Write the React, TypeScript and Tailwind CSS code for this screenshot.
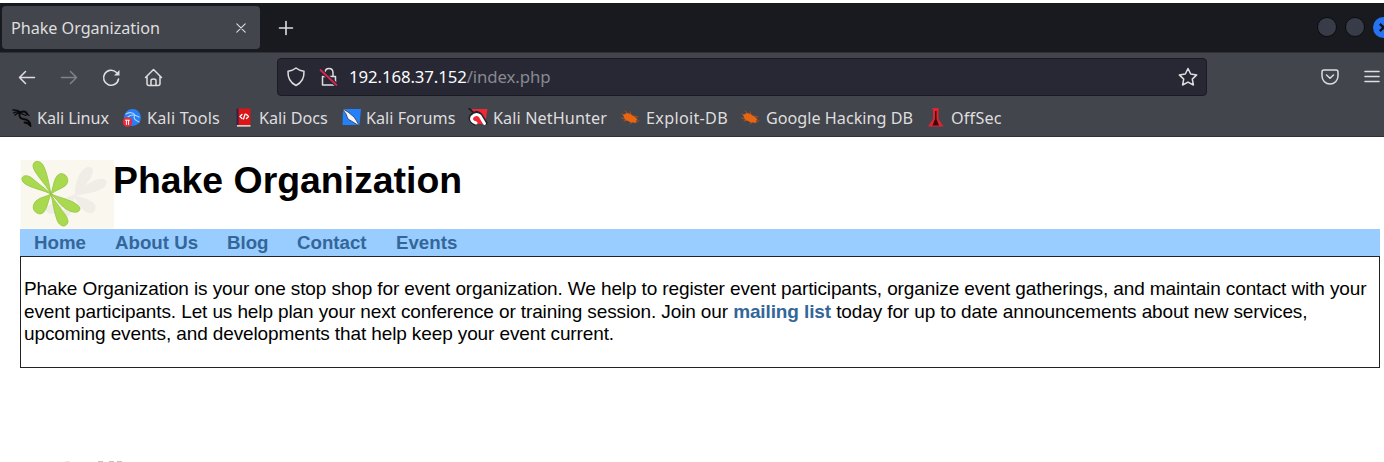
import type { ReactNode } from "react";

const CHROME = "font-['Noto_Sans',sans-serif]";

function Icon({ children, className = "h-5 w-5" }: { children: ReactNode; className?: string }) {
  return (
    <svg viewBox="0 0 20 20" className={`block shrink-0 ${className}`} fill="none" stroke="#dedee1" strokeWidth="1.3" strokeLinecap="round" strokeLinejoin="round">
      {children}
    </svg>
  );
}

function Bug() {
  return (
    <g>
      <path d="M1 6 L5 8 M4 3 L7 6 M0.500 10 L4 11 M9 16 L11 14 M13 8 L17 9 M14 13 L18 13 M9 4 L10 7 M3 13 L6 12" stroke="#b8541a" strokeWidth="0.9" />
      <path d="M2 7 L5 5.500 L7 5 L10 6.500 L14 9 L16.500 11.500 L15 12.500 L15.500 15 L12.500 14.500 L10 14.500 L7 13 L4 11.500Z" fill="#ea6512" stroke="none" />
    </g>
  );
}

const bookmarks: { label: string; width: string; tracking: string; icon: ReactNode }[] = [
  {
    label: "Kali Linux",
    width: "w-[110px]",
    tracking: "tracking-[-0.1px]",
    icon: (
      <g stroke="#08090b">
        <path d="M1 2 Q6 1.500 9 4.500 M1.500 5 Q5 3 8 4.500 M3 7 Q6 4.500 8.500 5" strokeWidth="1.4" />
        <path d="M8 4.500 Q14 2 15 6 M8 4.500 Q6 10 11 11 Q18 11.500 18.500 18 Q16 14.500 12.500 14.500" strokeWidth="1.9" />
        <path d="M13 4 L17 7.500 M9 5.500 L14 7.500" strokeWidth="1.1" />
      </g>
    ),
  },
  {
    label: "Kali Tools",
    width: "w-[112px]",
    tracking: "tracking-[0.2px]",
    icon: (
      <g stroke="none">
        <circle cx="10.5" cy="9.5" r="8.5" fill="#2a7ef4" />
        <path d="M4 6 Q10 3 13 7 Q10 11 17 14 M6 9 Q10 5 17 9" stroke="#a4d4ff" strokeWidth="1.2" />
        <circle cx="5.5" cy="14" r="4.8" fill="#e52a3c" />
        <path d="M3.5 12.2 H7.5 M4.4 12.5 V16.5 M6.6 12.5 V16.5" stroke="#fff" strokeWidth="1" />
      </g>
    ),
  },
  {
    label: "Kali Docs",
    width: "w-[107px]",
    tracking: "tracking-normal",
    icon: (
      <g stroke="none">
        <path d="M2.500 0.500 H16.500 V18 H2.500Z" fill="#dc1517" />
        <path d="M2.500 0.500 H4.500 V17 H2.500Z" fill="#1a2852" />
        <path d="M3 17 H16.500 V18.700 H3Z" fill="#d8cccc" />
        <path d="M8 6.500 L6 8.500 L8 10.500 M12.500 6.500 L14.500 8.500 L12.500 10.500 M11.200 6 L9.500 11" stroke="#fff" strokeWidth="1.3" />
      </g>
    ),
  },
  {
    label: "Kali Forums",
    width: "w-[127px]",
    tracking: "tracking-normal",
    icon: (
      <g stroke="none">
        <path d="M2 1 H20 L18.500 17 H1.500Z" fill="#2480fb" />
        <path d="M1 0.500 L7 4 L13 9 L15 12 L18.500 18 L12 14 L7 11 L5 6Z" fill="#f4f8fc" stroke="#333942" strokeWidth="0.8" />
      </g>
    ),
  },
  {
    label: "Kali NetHunter",
    width: "w-[153px]",
    tracking: "tracking-[0.1px]",
    icon: (
      <g stroke="none">
        <path d="M4 1 H19.500 L17 16 H5Z" fill="#ef2836" />
        <path d="M1 0.500 L6 5" stroke="#171a20" strokeWidth="1.6" />
        <path d="M7 15.500 Q0.500 12 3.500 7.500 Q8 2.500 12.500 7 L17.500 15" stroke="#20232a" strokeWidth="4" />
        <path d="M8 15 Q2 13 4 9 Q8 4.500 12 8 L16.500 15.500" stroke="#fff" strokeWidth="3" />
      </g>
    ),
  },
  { label: "Exploit-DB", width: "w-[120px]", tracking: "tracking-[0.3px]", icon: <Bug /> },
  { label: "Google Hacking DB", width: "w-[185px]", tracking: "tracking-normal", icon: <Bug /> },
  {
    label: "OffSec",
    width: "w-[90px]",
    tracking: "tracking-[0.2px]",
    icon: (
      <g stroke="none">
        <path d="M6 -0.500 H13 L12.500 3 V11 L17.500 18.500 H2 L7 11 V3Z" fill="#df2430" />
        <path d="M9 3 H10.500 V11 L13 17.500 H6.500 L9 11Z" fill="#3a090d" />
      </g>
    ),
  },
];

const nav = [
  { label: "Home", width: "w-[81px]" },
  { label: "About Us", width: "w-[112px]" },
  { label: "Blog", width: "w-[70px]" },
  { label: "Contact", width: "w-[99px]" },
  { label: "Events", width: "w-[80px]" },
];

function Flower() {
  return (
    <svg viewBox="0 0 94 69" className="block h-[69px] w-[94px] shrink-0">
      <rect x="0.500" width="93.500" height="68.500" fill="#faf7ee" />
      <g fill="#f0ede6">
        <path d="M55 33 C55 22 60 9 68 7 C76 6 73 16 68 22 C64 28 60 31 56 34Z" />
        <path d="M55 34 C64 26 76 17 84 19 C91 23 83 29 77 31 C69 34 62 34 56 36 C67 38 79 43 75 50 C72 56 64 53 59 45 L54 37 C54 46 52 56 46 58 C41 57 43 49 46 44 C38 53 30 57 26 51 C26 43 40 41 53 35Z" />
      </g>
      <g fill="#a9d94f" stroke="#93c440" strokeWidth="0.8">
        <path d="M31 34 C25 23 13 12 13 6 C13 0 20 0 23 5 C27 12 29 24 31 34Z" />
        <path d="M31 34 C21 29 4 27 2 20 C1 15 8 14 13 19 C20 25 26 29 31 34Z" />
        <path d="M31 34 C34 25 34 15 41 13.500 C48 14 50 22 45 26 C41 29 36 30 31 34Z" />
        <path d="M31 34 C27 43 27 53 20 54 C13 53 11 46 16 41 C20 37 26 37 31 34Z" />
        <path d="M31 34 C40 38 57 41 60 48 C60 54 52 53 46 49 C40 45 36 38 31 34Z" />
        <path d="M31 34 C36 45 49 56 48 62 C46 69 39 66 37 60 C34 52 33 43 31 34Z" />
      </g>
    </svg>
  );
}

export default function App() {
  return (
    <div className="h-[462px] w-[1384px] overflow-hidden bg-white pt-[3px]">
      <header className={`h-[134px] bg-[#43454c] text-[#dededf] ${CHROME}`}>
        <div className="flex h-[50px] items-start border-b border-[#303136] bg-[#191a1f] pt-[3px]">
          <div className="ml-[2px] flex h-[43px] w-[258px] items-center justify-between rounded bg-[#43454c] pr-3 pl-[9px] text-[16.2px]">
            <span className="pt-[2px] tracking-[-0.05px] whitespace-nowrap">Phake Organization</span>
            <Icon className="h-[14px] w-[14px]"><path d="M4 4 L16 16 M16 4 L4 16" strokeWidth="1.6" /></Icon>
          </div>
          <Icon className="mt-[12px] ml-[16px] h-5 w-5"><path d="M10 3.500 V16.500 M3.500 10 H16.500" strokeWidth="1.6" /></Icon>
          <div className="mt-[11px] -mr-[10px] ml-auto flex gap-[8px]">
            <span className="h-5 w-5 rounded-full border border-[#0b0c0e] bg-[#383c48]" />
            <span className="h-5 w-5 rounded-full border border-[#0b0c0e] bg-[#383c48]" />
            <svg viewBox="0 0 20 20" className="h-[21px] w-[21px]"><circle cx="10" cy="10" r="10" fill="#2573f3" /><path d="M6.500 6.500 L13.500 13.500 M13.500 6.500 L6.500 13.500" stroke="#101319" strokeWidth="2.2" /></svg>
          </div>
        </div>

        <div className="flex h-[48px] items-center pl-[17px]">
          <Icon><path d="M17.500 10.500 H2.500 M8.500 4.500 L2.500 10.500 L8.500 16.500" strokeWidth="1.5" /></Icon>
          <Icon className="ml-[22px] h-5 w-5 opacity-40"><path d="M2.500 10.500 H17.500 M11.500 4.500 L17.500 10.500 L11.500 16.500" strokeWidth="1.5" /></Icon>
          <Icon className="ml-[22px] h-5 w-5"><path d="M17.500 12 A7.500 7.500 0 1 1 15.500 5.500" strokeWidth="1.6" /><path d="M18.500 3 V8.500 H13Z" fill="#dedee1" stroke="none" /></Icon>
          <Icon className="ml-[22px] h-5 w-5"><path d="M2.500 10.500 L10.500 2.500 L18.500 10.500 M4 9.500 V16.500 Q4 18.500 6 18.500 H15 Q17 18.500 17 16.500 V9.500 M8 18.500 V13.500 Q8 12 10.500 12 Q13 12 13 13.500 V18.500" strokeWidth="1.5" /></Icon>
          <div className="ml-[114px] flex h-[38px] w-[930px] items-center rounded border border-[#191a22] bg-[#272833] pr-2 pl-[8px]">
            <Icon><path d="M10 1 Q13 3.500 18 4.300 Q18.500 14.500 10 18.500 Q1.500 14.500 2 4.300 Q7 3.500 10 1Z" strokeWidth="1.5" /></Icon>
            <Icon className="ml-[13px] h-5 w-5"><path d="M6 9 V6 Q6 1.500 10 1.500 Q14 1.500 14 6 V9 M3.500 9.500 H16.500 V18 H3.500Z" strokeWidth="1.5" /><path d="M1.500 3 L17.500 18" stroke="#272833" strokeWidth="4" /><path d="M1.500 3 L17.500 18" stroke="#d92550" strokeWidth="1.8" /></Icon>
            <span className="ml-[10px] text-[16.8px] tracking-[-0.1px] whitespace-nowrap text-[#fbfbfe]">192.168.37.152<span className="text-[#888991]">/index.php</span></span>
            <Icon className="ml-auto h-5 w-5"><path d="M10 1.500 L12.700 7 L18.700 7.900 L14.300 12.100 L15.400 18 L10 15.100 L4.600 18 L5.700 12.100 L1.300 7.900 L7.300 7Z" strokeWidth="1.5" /></Icon>
          </div>
          <Icon className="ml-[113px] h-5 w-5"><path d="M4 3 H16 Q18 3 18 5 V9 A8 8 0 0 1 2 9 V5 Q2 3 4 3Z M6.500 8 L10 11.300 L13.500 8" strokeWidth="1.5" /></Icon>
          <Icon className="ml-[22px] h-5 w-5"><path d="M3 4.500 H17 M3 9.500 H17 M3 14.500 H17" strokeWidth="1.6" /></Icon>
        </div>

        <div className="flex h-[36px] items-center border-b border-[#303136] pb-px pl-[12px] text-[16.2px]">
          {bookmarks.map((item) => (
            <div key={item.label} className={`flex shrink-0 items-center gap-[5px] whitespace-nowrap ${item.width} ${item.tracking}`}>
              <Icon>{item.icon}</Icon>
              <span>{item.label}</span>
            </div>
          ))}
        </div>
      </header>

      <main className="mt-[23px] ml-[20px] w-[1360px] font-['Liberation_Sans',Arial,sans-serif] text-[19px] leading-[22.5px] text-black">
        <div className="flex h-[69px] items-start">
          <Flower />
          <h1 className="-ml-px text-[37.4px] leading-[40px] font-bold">Phake Organization</h1>
        </div>
        <nav className="flex h-[27px] items-center bg-[#99ccff] pt-px pl-[14px] text-[18.7px] font-bold text-[#336699]">
          {nav.map((item) => (
            <a key={item.label} className={`whitespace-nowrap ${item.width}`}>{item.label}</a>
          ))}
        </nav>
        <section className="h-[112px] border border-[#222222] pt-[21.3px] pl-[3px] tracking-[-0.115px] whitespace-nowrap">
          <p>
            Phake Organization is your one stop shop for event organization. We help to register event participants, organize event gatherings, and maintain contact with your
            <br />
            event participants. Let us help plan your next conference or training session. Join our <b className="text-[#336699]">mailing list</b> today for up to date announcements about new services,
            <br />
            upcoming events, and developments that help keep your event current.
          </p>
        </section>
        <div className="mt-[93px] flex h-px">
          <span className="ml-[45px] h-px w-[5px] bg-[#e8e8e8]" />
          <span className="ml-[28px] h-px w-[5px] bg-[#c0c0c0]" />
          <span className="ml-[6px] h-px w-[5px] bg-[#c0c0c0]" />
          <span className="ml-[3px] h-px w-[5px] bg-[#c0c0c0]" />
        </div>
      </main>
    </div>
  );
}
